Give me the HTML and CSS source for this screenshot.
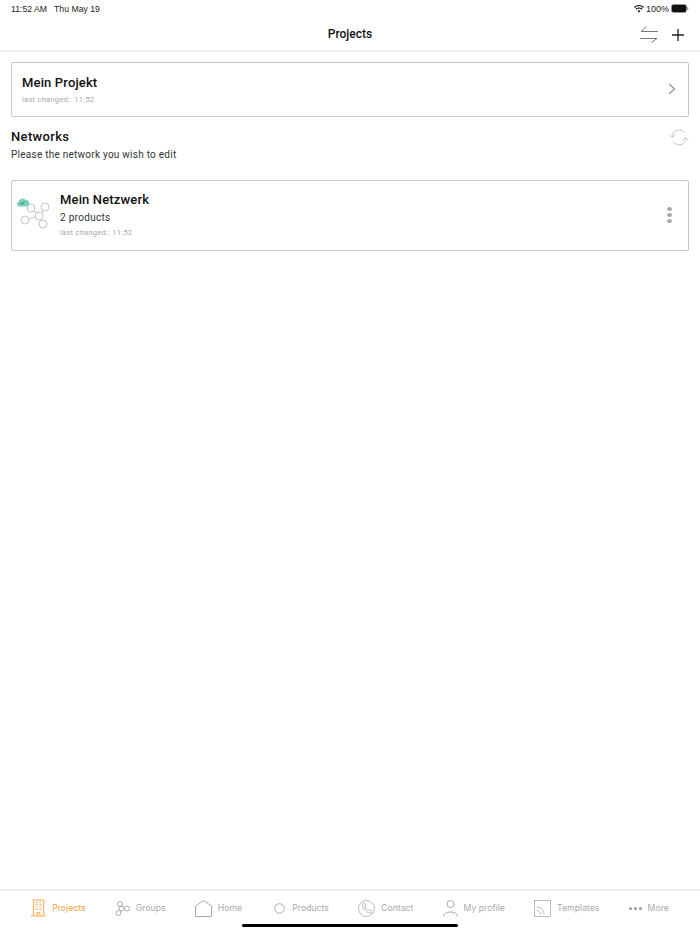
FILE: index.html
```html
<!DOCTYPE html>
<html lang="en">
<head>
<meta charset="utf-8">
<title>Projects</title>
<link rel="stylesheet" href="styles.css">
</head>
<body>
<div class="app">
  <div class="status">
    <div class="status-left"><span>11:52 AM</span><span>Thu May 19</span></div>
    <div class="status-right">
      <svg class="wifi" width="10" height="8" viewBox="0 0 12 9"><path d="M6 8.800 4.200 6.800a2.600 2.600 0 0 1 3.600 0zM2.900 5.500 1.800 4.300a6 6 0 0 1 8.400 0L9.100 5.500a4.400 4.400 0 0 0-6.200 0zM.8 3.200 0 2.200a8.600 8.600 0 0 1 12 0l-.8 1a7.200 7.200 0 0 0-10.400 0z" fill="#111"/></svg>
      <span>100%</span>
      <svg width="18" height="9" viewBox="0 0 18 9"><rect x=".5" y=".5" width="15" height="8" rx="2" fill="#111" stroke="#999" stroke-width=".6"/><rect x="16" y="3" width="1.300" height="3" rx=".6" fill="#999"/></svg>
    </div>
  </div>
  <header class="nav">
    <h1 class="nav-title">Projects</h1>
    <div class="nav-actions">
      <svg width="18" height="17" viewBox="0 0 18 17" fill="none" stroke="#777" stroke-width="1"><path d="M18 5.500H1L6.500 .5M0 12.500h17L11.500 16.500"/></svg>
      <svg width="12" height="12" viewBox="0 0 12 12" fill="none" stroke="#222" stroke-width="1.300"><path d="M6 0v12M0 6h12"/></svg>
    </div>
  </header>
  <main class="content">
    <section class="card project">
      <div class="project-body">
        <h2 class="card-title">Mein Projekt</h2>
        <p class="meta project-meta">last changed:: 11:52</p>
      </div>
      <svg class="chevron" width="8" height="12" viewBox="0 0 8 12" fill="none" stroke="#999" stroke-width="1.400"><path d="M1 1l5.500 5L1 11"/></svg>
    </section>
    <section class="section-head">
      <div>
        <h2 class="section-title">Networks</h2>
        <p class="section-sub">Please the network you wish to edit</p>
      </div>
      <svg class="refresh" width="20" height="17" viewBox="0 0 20 17" fill="none" stroke="#c8c8c8" stroke-width="1"><path d="M3.500 8A6.700 6.700 0 0 1 15.500 3.500M16.500 9A6.700 6.700 0 0 1 4.500 13.500M.5 5.500 3.500 8.500 6.500 5.500M13.500 11.500 16.500 8.500 19.500 11.500"/></svg>
    </section>
    <section class="card network">
      <svg class="net-icon" width="36" height="36" viewBox="0 0 36 36" fill="none" stroke="#c4c4c4" stroke-width="1">
        <circle cx="15" cy="10" r="4"/><circle cx="29" cy="9" r="4"/><circle cx="23" cy="18" r="4"/><circle cx="9" cy="22" r="4"/><circle cx="27" cy="26" r="4"/>
        <path d="M18 13l2 2M26 15l1-3M13 21l6-2M25 22l1 1"/>
        <path d="M3 8.500a2.500 2.500 0 0 1-.5-4.800 4 4 0 0 1 7-1.700 3 3 0 0 1 1 6.500z" fill="#7ad0bc" stroke="none"/>
        <path d="M4.500 5l1.500 1.500L8.500 3.500" stroke="#2c7d6a" stroke-width="1"/>
      </svg>
      <div class="net-body">
        <h2 class="card-title">Mein Netzwerk</h2>
        <p class="net-count">2 products</p>
        <p class="meta">last changed:: 11:52</p>
      </div>
      <div class="dots"><i></i><i></i><i></i></div>
    </section>
  </main>
  <nav class="tabs">
    <div class="tab active">
      <svg width="15" height="18" viewBox="0 0 16 18" fill="none" stroke="#f5a33c" stroke-width="1"><path d="M2.500 17V.5h11V17M0 17.500h16M6.500 17v-3h3v3M5 3h2M9 3h2M5 5.500h2M9 5.500h2M5 8h2M9 8h2M5 10.500h2M9 10.500h2"/></svg>
      <span>Projects</span>
    </div>
    <div class="tab">
      <svg width="15" height="15" viewBox="0 0 15 15" fill="none" stroke="#aaa" stroke-width="1"><circle cx="5" cy="3" r="2.500"/><circle cx="3.500" cy="12" r="2.500"/><circle cx="6.500" cy="7.500" r="2.500"/><circle cx="12" cy="7.500" r="2.500"/></svg>
      <span>Groups</span>
    </div>
    <div class="tab home">
      <svg width="17" height="17" viewBox="0 0 17 17" fill="none" stroke="#aaa" stroke-width="1"><path d="M.5 16.500V6L8.500.5 16.500 6v10.500z"/></svg>
      <span>Home</span>
    </div>
    <div class="tab products">
      <svg width="11" height="11" viewBox="0 0 11 11" fill="none" stroke="#aaa" stroke-width="1"><circle cx="5.500" cy="5.500" r="4.800"/></svg>
      <span>Products</span>
    </div>
    <div class="tab">
      <svg width="17" height="17" viewBox="0 0 17 17" fill="none" stroke="#aaa" stroke-width=".8"><circle cx="8.500" cy="8.500" r="8"/><path d="M4.500 4l2-1 1.500 3-1 1c.5 1.500 1.800 2.800 3.300 3.500l1.200-1 2.500 2-1 1.800c-3.500.5-8.800-4.800-8.500-9.300z"/></svg>
      <span>Contact</span>
    </div>
    <div class="tab">
      <svg width="15" height="17" viewBox="0 0 15 17" fill="none" stroke="#aaa" stroke-width="1"><circle cx="7.500" cy="4" r="3.500"/><path d="M.5 16.500c0-6 14-6 14 0"/></svg>
      <span>My profile</span>
    </div>
    <div class="tab">
      <svg width="17" height="17" viewBox="0 0 17 17" fill="none" stroke="#aaa" stroke-width=".8"><rect x=".5" y=".5" width="16" height="16"/><path d="M3 7a7 7 0 0 1 7 7.500M3 10.500a3.500 3.500 0 0 1 3.500 4"/></svg>
      <span>Templates</span>
    </div>
    <div class="tab more">
      <div class="more-dots"><i></i><i></i><i></i></div>
      <span>More</span>
    </div>
  </nav>
  <div class="home-indicator"></div>
</div>
</body>
</html>
```

FILE: styles.css
```css
* { box-sizing: border-box; }
html, body { margin: 0; padding: 0; }
body { background: #fff; color: #111; font-family: Roboto, "Liberation Sans", sans-serif; }
h1, h2, p { margin: 0; font-weight: normal; }
.app { width: 700px; height: 934px; display: flex; flex-direction: column; overflow: hidden; }

.status { height: 17px; padding: 0 11px; display: flex; justify-content: space-between; align-items: center; font: 8.700px/12px "Liberation Sans", Arial, sans-serif; color: #222; }
.status-left { display: flex; gap: 7px; }
.status-right { display: flex; gap: 2px; align-items: center; font-size: 9px; }

.nav { height: 35px; position: relative; border-bottom: 2px solid #eeeeee; display: flex; align-items: center; justify-content: center; }
.nav-title { font-size: 12px; font-weight: 500; }
.nav-actions { position: absolute; right: 16px; top: 9px; display: flex; align-items: center; gap: 14px; }

.content { flex: 1; padding: 10px 11px 0; }
.card { background: #fff; border: 1px solid #c6c6c6; border-radius: 2px; display: flex; align-items: center; }
.project { height: 55px; padding: 0 12px 0 10px; justify-content: space-between; }
.project-body { margin-bottom: 1px; }
.chevron { margin-bottom: 1px; }
.card-title { font-size: 13px; line-height: 18px; font-weight: 500; letter-spacing: .15px; }
.meta { font-size: 7.500px; line-height: 11px; color: #a8a8a8; letter-spacing: .27px; }
.project-meta { margin-top: 2px; }

.section-head { margin-top: 12px; height: 51px; display: flex; justify-content: space-between; align-items: flex-start; }
.section-title { font-size: 13px; line-height: 16px; font-weight: 500; letter-spacing: .35px; }
.section-sub { margin-top: 3px; font-size: 10px; line-height: 14px; letter-spacing: .25px; color: #333; }

.network { height: 71px; padding: 0 16px 0 4px; }
.net-icon { flex: none; }
.net-body { flex: 1; margin-left: 8px; margin-bottom: 2px; }
.net-count { font-size: 10px; line-height: 15px; letter-spacing: .3px; margin-top: 1px; color: #333; }
.network .meta { margin-top: 2px; }
.dots { display: flex; flex-direction: column; gap: 2px; margin-bottom: 2px; }
.dots i { display: block; width: 5px; height: 4px; border-radius: 50%; background: #a8a8a8; }

.tabs { height: 45px; padding-top: 8px; border-top: 2px solid #eeeeee; display: flex; justify-content: center; align-items: flex-start; gap: 29.200px; }
.tab { display: flex; align-items: center; gap: 6px; height: 18px; font: 8.700px/12px "Inter", "Liberation Sans", sans-serif; color: #aaa; white-space: nowrap; }
.tab.active { color: #f5a33c; }
.home { margin-right: 3px; }
.products { gap: 7px; }
.more-dots { display: flex; gap: 2px; }
.more-dots i { display: block; width: 3px; height: 3px; border-radius: 50%; background: #999; }
.home-indicator { position: absolute; left: 242px; top: 924px; width: 216px; height: 3px; border-radius: 2px; background: #000; }
```
